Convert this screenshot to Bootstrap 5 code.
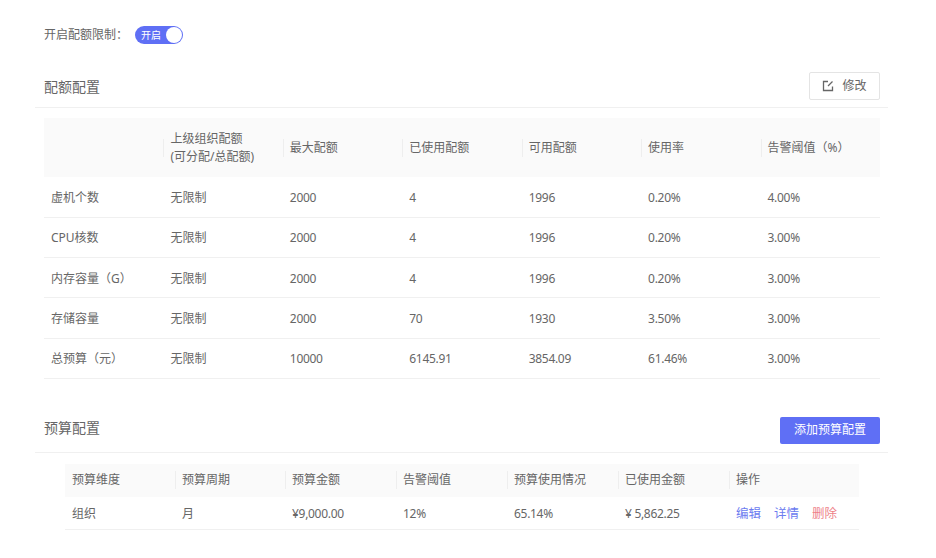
<!DOCTYPE html>
<html lang="zh">
<head>
    <meta charset="UTF-8">
    <title>配额配置</title>
    <link href="https://cdn.jsdelivr.net/npm/bootstrap@5.3.0/dist/css/bootstrap.min.css" rel="stylesheet">
    <style>
        body {
            background: #fff;
            color: #666;
            font-family: "Noto Sans", "Noto Sans CJK SC", sans-serif;
            font-size: 12px;
            overflow: hidden;
        }
        .page-wrap { padding: 26px 48px 0 35px; }
        .limit-row { height: 18px; padding-left: 9px; margin-bottom: 28px; }
        .limit-label { width: 91px; }
        .quota-switch {
            width: 48px;
            height: 18px;
            border-radius: 9px;
            background: #5f6ff5;
            color: #fff;
            font-size: 10px;
            line-height: 18px;
            padding-left: 6px;
        }
        .quota-knob {
            position: absolute;
            right: 1px;
            top: 1px;
            width: 16px;
            height: 16px;
            border-radius: 50%;
            background: #fff;
        }
        .section-head { border-bottom: 1px solid #f0f0f0; padding-left: 9px; padding-right: 8px; height: 36px; }
        .section-title { color: #666; font-size: 14px; line-height: 20px; }
        .title-quota { padding-top: 5px; }
        .title-budget { padding-top: 1px; }
        .btn-edit {
            width: 71px;
            height: 28px;
            padding: 0;
            color: #666;
            font-size: 12px;
            border: 1px solid #e4e4e4;
            border-radius: 2px;
            background: #fff;
        }
        .btn-add {
            width: 100px;
            height: 27px;
            padding: 0;
            color: #fff;
            font-size: 12px;
            background: #5f6ff5;
            border: 0;
            border-radius: 2px;
        }
        .quota-table, .budget-table { table-layout: fixed; margin: 0; color: #666; }
        .quota-table { width: 836px; margin: 10px 0 0 9px; }
        .budget-table { width: 794px; margin: 11px 0 0 30px; }
        .quota-table th, .budget-table th {
            background: #fafafa;
            font-weight: 400;
            color: #666;
            border-bottom: 0;
            padding: 0 7px;
            position: relative;
            vertical-align: middle;
        }
        .quota-table td, .budget-table td {
            color: #666;
            border-bottom: 1px solid #f0f0f0;
            padding: 2px 7px 0;
            vertical-align: middle;
        }
        .quota-table td:nth-child(n+3), .budget-table td:nth-child(n+3) { letter-spacing: -.3px; }
        .quota-table thead tr { height: 59px; }
        .quota-table tbody tr { height: 40.3px; }
        .budget-table thead tr { height: 33px; }
        .budget-table tbody tr { height: 33px; }
        .head-sep th + th::before {
            content: "";
            position: absolute;
            left: 0;
            top: 50%;
            height: 18px;
            margin-top: -9px;
            border-left: 1px solid #eee;
        }
        .act-link { color: #6c7cf0; text-decoration: none; margin-right: 13px; font-size: 12.5px; letter-spacing: 0; }
        .act-del { color: #ee7f88; }
        .gap-budget { margin-top: 38px; }
    </style>
</head>
<body>
    <div class="page-wrap">
        <div class="limit-row d-flex align-items-center">
            <div class="limit-label">开启配额限制：</div>
            <div class="quota-switch position-relative">开启<span class="quota-knob"></span></div>
        </div>

        <!-- 配额配置 -->
        <div class="section-head d-flex justify-content-between align-items-start">
            <div class="section-title title-quota">配额配置</div>
            <button type="button" class="btn btn-edit d-flex align-items-center justify-content-center gap-2">
                <svg width="12" height="12" viewBox="0 0 12 12" fill="none" stroke="#666" stroke-width="1.3">
                    <path d="M6 1.5H1.5V10.5H10.5V6.5"/>
                    <path d="M6 6L10.5 1.5"/>
                </svg>
                <span>修改</span>
            </button>
        </div>
        <table class="table quota-table">
            <thead>
                <tr class="head-sep">
                    <th></th>
                    <th>上级组织配额<br>(可分配/总配额)</th>
                    <th>最大配额</th>
                    <th>已使用配额</th>
                    <th>可用配额</th>
                    <th>使用率</th>
                    <th>告警阈值（%）</th>
                </tr>
            </thead>
            <tbody>
                <tr><td>虚机个数</td><td>无限制</td><td>2000</td><td>4</td><td>1996</td><td>0.20%</td><td>4.00%</td></tr>
                <tr><td>CPU核数</td><td>无限制</td><td>2000</td><td>4</td><td>1996</td><td>0.20%</td><td>3.00%</td></tr>
                <tr><td>内存容量（G）</td><td>无限制</td><td>2000</td><td>4</td><td>1996</td><td>0.20%</td><td>3.00%</td></tr>
                <tr><td>存储容量</td><td>无限制</td><td>2000</td><td>70</td><td>1930</td><td>3.50%</td><td>3.00%</td></tr>
                <tr><td>总预算（元）</td><td>无限制</td><td>10000</td><td>6145.91</td><td>3854.09</td><td>61.46%</td><td>3.00%</td></tr>
            </tbody>
        </table>

        <!-- 预算配置 -->
        <div class="section-head gap-budget d-flex justify-content-between align-items-start">
            <div class="section-title title-budget">预算配置</div>
            <button type="button" class="btn btn-add">添加预算配置</button>
        </div>
        <table class="table budget-table">
            <colgroup>
                <col style="width: 110px"><col style="width: 110px"><col style="width: 111px">
                <col style="width: 111px"><col style="width: 111px"><col style="width: 111px"><col>
            </colgroup>
            <thead>
                <tr class="head-sep">
                    <th>预算维度</th>
                    <th>预算周期</th>
                    <th>预算金额</th>
                    <th>告警阈值</th>
                    <th>预算使用情况</th>
                    <th>已使用金额</th>
                    <th>操作</th>
                </tr>
            </thead>
            <tbody>
                <tr>
                    <td>组织</td><td>月</td><td>¥9,000.00</td><td>12%</td><td>65.14%</td><td>¥ 5,862.25</td>
                    <td><a href="#" class="act-link">编辑</a><a href="#" class="act-link">详情</a><a href="#" class="act-link act-del">删除</a></td>
                </tr>
            </tbody>
        </table>
    </div>
</body>
</html>
